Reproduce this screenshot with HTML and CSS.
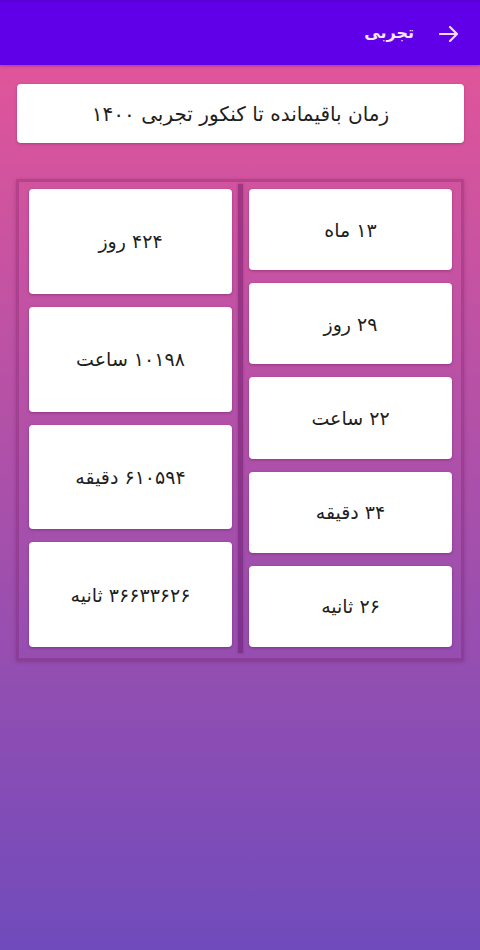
FILE: index.html
```html
<!DOCTYPE html>
<html lang="fa" dir="rtl">
<head>
<meta charset="utf-8">
<title>تجربی</title>
<link rel="stylesheet" href="styles.css">
</head>
<body>
<div class="screen">
  <header class="appbar">
    <svg class="back" width="20" height="16" viewBox="0 0 20 16" aria-hidden="true">
      <path d="M1 8 H18 M11 1 L18 8 L11 15" fill="none" stroke="currentColor" stroke-width="2.2" stroke-linecap="round" stroke-linejoin="round"/>
    </svg>
    <h1 class="title">تجربی</h1>
  </header>
  <main class="content">
    <div class="headline">زمان باقیمانده تا کنکور تجربی ۱۴۰۰</div>
    <section class="panel">
      <div class="col col-parts">
        <div class="card">۱۳ ماه</div>
        <div class="card">۲۹ روز</div>
        <div class="card">۲۲ ساعت</div>
        <div class="card">۳۴ دقیقه</div>
        <div class="card">۲۶ ثانیه</div>
      </div>
      <div class="divider"></div>
      <div class="col col-totals">
        <div class="card">۴۲۴ روز</div>
        <div class="card">۱۰۱۹۸ ساعت</div>
        <div class="card">۶۱۰۵۹۴ دقیقه</div>
        <div class="card">۳۶۶۳۳۶۲۶ ثانیه</div>
      </div>
    </section>
  </main>
</div>
</body>
</html>
```

FILE: styles.css
```css
* { box-sizing: border-box; }
html, body {
  margin: 0;
  padding: 0;
  width: 480px;
  height: 950px;
  overflow: hidden;
}
body {
  font-family: "DejaVu Sans", "Noto Sans", sans-serif;
  color: #222;
}
.screen {
  width: 480px;
  height: 950px;
  display: flex;
  flex-direction: column;
  background: linear-gradient(180deg, #e0559a 0px, #e0559a 65px, #704bbc 950px);
}
.appbar {
  height: 65px;
  flex: none;
  background: #5f00e8;
  border-top: 2px solid #5800d4;
  display: flex;
  align-items: center;
  padding: 0 21px 0 0;
  gap: 25px;
  box-shadow: 0 1px 3px rgba(60, 0, 120, 0.35);
}
.back {
  color: #eed8fb;
  flex: none;
}
.title {
  margin: 0;
  font-size: 16px;
  font-weight: bold;
  color: #f6e6f6;
  line-height: 1;
  position: relative;
  top: -1px;
}
.content {
  padding: 19px 16px 0 16px;
  display: flex;
  flex-direction: column;
}
.headline {
  margin: 0 0 0 1px;
  height: 59px;
  background: #fff;
  border-radius: 4px;
  display: flex;
  align-items: center;
  justify-content: center;
  font-size: 20px;
  color: #1e1e1e;
  box-shadow: 0 1px 3px rgba(90, 0, 60, 0.3);
}
.panel {
  margin-top: 36px;
  height: 482px;
  border: 3px solid rgba(110, 20, 90, 0.28);
  box-shadow: 0 1px 4px rgba(70, 0, 60, 0.25);
  padding: 7px 9px 11px 10px;
  display: flex;
  gap: 0;
}
.col {
  flex: 1;
  display: flex;
  flex-direction: column;
  gap: 13px;
}
.divider {
  flex: none;
  width: 17px;
  margin: -5px 0 -6px 0;
  display: flex;
  justify-content: center;
}
.divider::before {
  content: "";
  width: 5px;
  background: rgba(90, 10, 90, 0.4);
  box-shadow: 0 0 3px rgba(90, 10, 90, 0.35);
}
.card {
  flex: 1;
  background: #fff;
  border-radius: 4px;
  display: flex;
  align-items: center;
  justify-content: center;
  font-size: 19px;
  color: #1e1e1e;
  box-shadow: 0 1px 3px rgba(80, 0, 70, 0.35);
}
```
